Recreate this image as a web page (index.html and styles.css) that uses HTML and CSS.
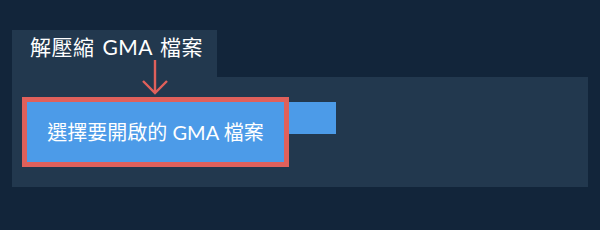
FILE: index.html
```html
<!DOCTYPE html>
<html lang="zh-Hant">
<head>
    <meta charset="UTF-8">
    <meta name="viewport" content="width=device-width, initial-scale=1.0">
    <title>解壓縮 GMA 檔案</title>
    <link rel="stylesheet" href="styles.css">
</head>
<body>
    <div class="page">
        <div class="tab">解壓縮 GMA 檔案</div>
        <div class="panel">
            <div class="row">
                <div class="highlight">
                    <div class="open-btn">選擇要開啟的 GMA 檔案</div>
                </div>
                <div class="btn-tail"></div>
            </div>
        </div>
        <svg class="arrow" width="30" height="36" viewBox="0 0 30 36">
            <path d="M14 0 V33 M2 21 L14 33 L26 21" fill="none" stroke="#e0605b" stroke-width="2.4"/>
        </svg>
    </div>
</body>
</html>
```

FILE: styles.css
```css
body {
    margin: 0;
    background: #12253a;
    font-family: Lato, "Noto Sans CJK TC", sans-serif;
    color: #fff;
}

.page {
    position: relative;
    padding: 30px 12px 0 12px;
    width: 576px;
}

.tab {
    display: inline-block;
    vertical-align: top;
    width: 187px;
    height: 47px;
    padding-left: 18px;
    background: #22384e;
    font-size: 21px;
    line-height: 34px;
    word-spacing: 2px;
    letter-spacing: 0.5px;
    white-space: nowrap;
}

.panel {
    background: #22384e;
    height: 90px;
    padding: 20px 0 0 10px;
}

.row {
    display: flex;
    align-items: flex-start;
}

.highlight {
    border: 5px solid #e0605b;
}

.open-btn {
    width: 257px;
    height: 60px;
    background: #4c9be8;
    font-size: 20px;
    line-height: 60px;
    text-align: center;
    white-space: nowrap;
}

.btn-tail {
    width: 47px;
    height: 32px;
    margin-top: 5px;
    background: #4c9be8;
}

.arrow {
    position: absolute;
    left: 141px;
    top: 60px;
}
```
